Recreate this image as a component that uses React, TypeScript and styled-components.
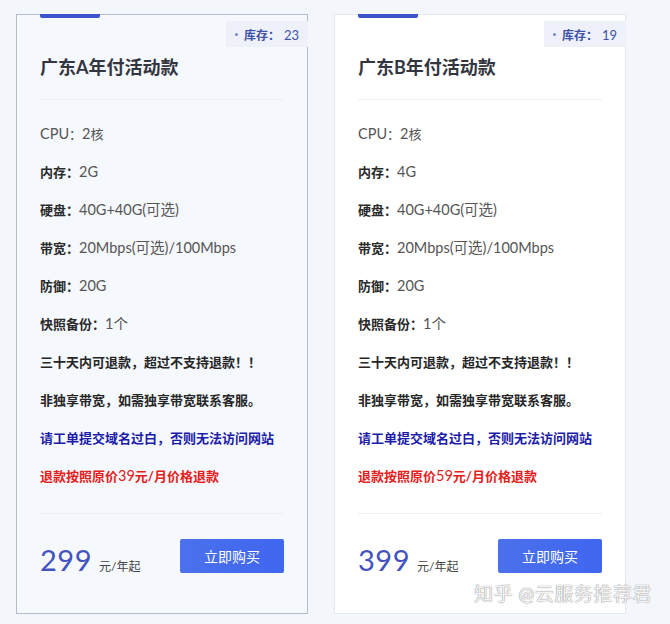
import React from "react";
import styled, { createGlobalStyle } from "styled-components";

const GlobalStyle = createGlobalStyle`
  body {
    margin: 0;
    background: #f3f6fb;
    font-family: "Lato", "Noto Sans CJK SC", sans-serif;
  }
`;

const Page = styled.div`
  position: relative;
  width: 670px;
  height: 624px;
  padding: 14px 0 0 16px;
  box-sizing: border-box;
  display: flex;
  gap: 26px;
  align-items: flex-start;
`;

const Card = styled.div<{ $active?: boolean }>`
  position: relative;
  width: 292px;
  height: 600px;
  box-sizing: border-box;
  padding: 0 23px;
  background: ${(p) => (p.$active ? "#f5f8fc" : "#ffffff")};
  border: 1px solid ${(p) => (p.$active ? "#b4bbd1" : "#e3e8f1")};
`;

const Accent = styled.div`
  width: 60px;
  height: 4px;
  margin-top: -1px;
  background: #3d55c8;
  border-radius: 0 0 2px 2px;
`;

const Stock = styled.div`
  position: absolute;
  top: 6px;
  right: -1px;
  height: 26px;
  padding: 0 9px 0 9px;
  display: flex;
  align-items: center;
  gap: 6px;
  background: #eef1f9;
  font-size: 12px;
  color: #3f52a8;
`;

const Dot = styled.span`
  width: 3px;
  height: 3px;
  border-radius: 50%;
  background: #7b88c4;
`;

const StockLabel = styled.span`
  font-weight: 700;
`;

const StockCount = styled.span`
  font-size: 13px;
  font-weight: 400;
  margin-left: 4px;
`;

const Title = styled.h2`
  margin: 36px 0 0;
  font-size: 18px;
  line-height: 26px;
  font-weight: 700;
  color: #333640;
`;

const Divider = styled.div<{ $top: number; $bottom: number }>`
  height: 1px;
  background: #eceff4;
  margin: ${(p) => p.$top}px 0 ${(p) => p.$bottom}px;
`;

const Row = styled.div<{ $tone?: "plain" | "strong" | "blue" | "red" }>`
  height: 38px;
  line-height: 38px;
  font-size: 13px;
  white-space: nowrap;
  font-weight: ${(p) => (p.$tone && p.$tone !== "plain" ? 700 : 400)};
  color: ${(p) =>
    p.$tone === "blue"
      ? "#1c1ca8"
      : p.$tone === "red"
      ? "#e3201b"
      : p.$tone === "strong"
      ? "#262626"
      : "#555"};
`;

const Label = styled.b`
  color: #2a2a2a;
  font-weight: 700;
`;

const Value = styled.span`
  font-size: 14.5px;
  font-weight: 400;
  color: #555;
`;

const Thin = styled.span`
  font-size: 14.5px;
  font-weight: 400;
`;

const Footer = styled.div`
  display: flex;
  align-items: center;
  justify-content: space-between;
  height: 34px;
`;

const Price = styled.div`
  display: flex;
  align-items: baseline;
  gap: 7px;
  padding-top: 6px;
`;

const Amount = styled.span`
  font-size: 29px;
  color: #4352bf;
  font-weight: 400;
  letter-spacing: 0.5px;
`;

const Unit = styled.span`
  font-size: 12px;
  color: #444;
`;

const BuyButton = styled.button`
  width: 104px;
  height: 34px;
  border: none;
  border-radius: 2px;
  background: linear-gradient(90deg, #4b71ec 0%, #3f66ef 100%);
  color: #fff;
  font-family: inherit;
  font-size: 14px;
  cursor: pointer;
`;

const Watermark = styled.div`
  position: absolute;
  right: 18px;
  bottom: 18px;
  font-size: 19px;
  letter-spacing: 0.5px;
  color: rgba(255, 255, 255, 0.92);
  text-shadow: 0 0 1px #8a8a8a, 0 0 1px #9a9a9a;
`;

type Plan = {
  name: string;
  stock: number;
  mem: string;
  refund: string;
  price: number;
  active?: boolean;
};

const plans: Plan[] = [
  { name: "广东A年付活动款", stock: 23, mem: "2G", refund: "39", price: 299, active: true },
  { name: "广东B年付活动款", stock: 19, mem: "4G", refund: "59", price: 399 },
];

const PlanCard = ({ plan }: { plan: Plan }) => (
  <Card $active={plan.active}>
    <Accent />
    <Stock>
      <Dot />
      <StockLabel>
        库存：<StockCount>{plan.stock}</StockCount>
      </StockLabel>
    </Stock>
    <Title>{plan.name}</Title>
    <Divider $top={19} $bottom={15} />
    <Row>
      <Value>CPU</Value>：<Value>2</Value>核
    </Row>
    <Row>
      <Label>内存：</Label>
      <Value>{plan.mem}</Value>
    </Row>
    <Row>
      <Label>硬盘：</Label>
      <Value>40G+40G(可选)</Value>
    </Row>
    <Row>
      <Label>带宽：</Label>
      <Value>20Mbps(可选)/100Mbps</Value>
    </Row>
    <Row>
      <Label>防御：</Label>
      <Value>20G</Value>
    </Row>
    <Row>
      <Label>快照备份：</Label>
      <Value>1个</Value>
    </Row>
    <Row $tone="strong">三十天内可退款，超过不支持退款！！</Row>
    <Row $tone="strong">非独享带宽，如需独享带宽联系客服。</Row>
    <Row $tone="blue">请工单提交域名过白，否则无法访问网站</Row>
    <Row $tone="red">
      退款按照原价<Thin>{plan.refund}</Thin>元/月价格退款
    </Row>
    <Divider $top={18} $bottom={25} />
    <Footer>
      <Price>
        <Amount>{plan.price}</Amount>
        <Unit>元/年起</Unit>
      </Price>
      <BuyButton>立即购买</BuyButton>
    </Footer>
  </Card>
);

const App = () => (
  <>
    <GlobalStyle />
    <Page>
      {plans.map((p) => (
        <PlanCard key={p.name} plan={p} />
      ))}
      <Watermark>知乎 @云服务推荐君</Watermark>
    </Page>
  </>
);

export default App;
